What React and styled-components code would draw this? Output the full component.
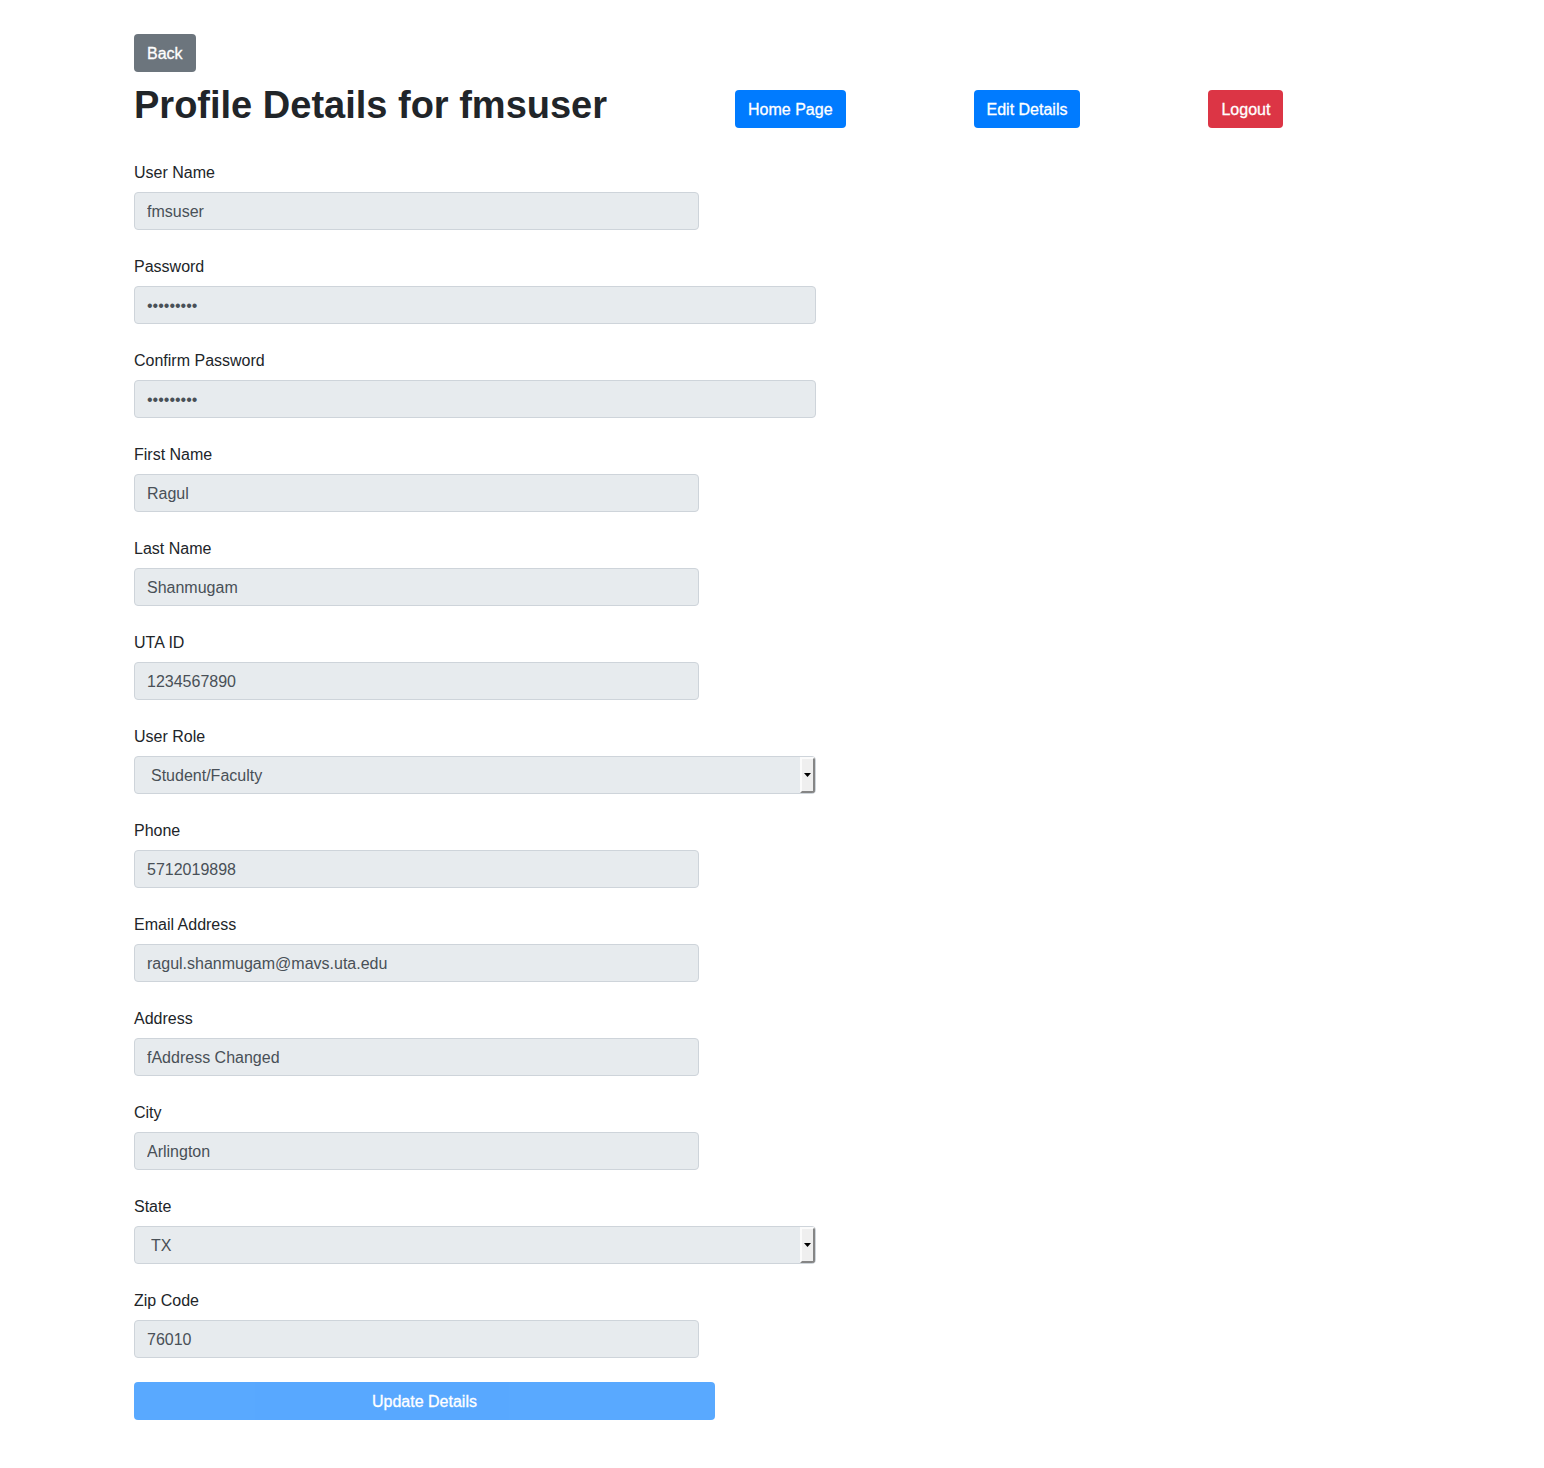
import React from "react";
import styled, { createGlobalStyle, css } from "styled-components";

const GlobalStyle = createGlobalStyle`
  *, *::before, *::after { box-sizing: border-box; }
  body {
    margin: 0;
    background: #fff;
    color: #212529;
    font-family: "Liberation Sans", Arial, sans-serif;
    font-size: 16px;
    line-height: 24px;
  }
`;

const Page = styled.main`
  padding: 34px 134px 48px;

  @media (max-width: 900px) {
    padding: 24px;
  }
`;

const variants = {
  primary: "#007bff",
  secondary: "#6c757d",
  danger: "#dc3545",
};

const Button = styled.button`
  display: block;
  padding: 8px 13px 6px;
  border: 0;
  border-radius: 4px;
  background: ${({ $variant }) => variants[$variant]};
  color: #fff;
  font: inherit;
  -webkit-text-stroke: 0.3px #fff;
  white-space: nowrap;
  cursor: pointer;

  ${({ $block }) =>
    $block &&
    css`
      width: 100%;
      max-width: 581px;
    `}

  &:disabled {
    opacity: 0.65;
    cursor: default;
  }
`;

const Header = styled.header`
  display: flex;
  flex-wrap: wrap;
  align-items: flex-end;
  gap: 16px 128px;
  margin: 10px 0 32px;
`;

const Title = styled.h1`
  margin: 0;
  font-size: 38px;
  line-height: 46px;
  font-weight: 700;
`;

const Form = styled.form`
  display: flex;
  flex-direction: column;
  gap: 24px;
  max-width: 682px;
`;

const Field = styled.div`
  display: flex;
  flex-direction: column;
  gap: 6px;
`;

const Label = styled.label`
  line-height: 26px;
`;

const controlBox = css`
  width: 100%;
  height: 38px;
  border: 1px solid #ced4da;
  border-radius: 4px;
  background: #e7ebee;
`;

const controlText = css`
  color: #495057;
  font: inherit;
  opacity: 1;
`;

const Input = styled.input`
  ${controlBox}
  ${controlText}
  max-width: ${({ $wide }) => ($wide ? "none" : "565px")};
  padding: 7px 12px 5px;
`;

const SelectBox = styled.div`
  ${controlBox}
  display: flex;
  overflow: hidden;
`;

const Select = styled.select`
  ${controlText}
  flex: 1;
  min-width: 0;
  padding: 2px 16px 0;
  border: 0;
  background: transparent;
  appearance: none;

  &:disabled {
    opacity: 1;
  }
`;

const Arrow = styled.span`
  display: flex;
  align-items: center;
  justify-content: center;
  width: 15px;
  border: 2px solid;
  border-color: #fbfbfb #858585 #858585 #fbfbfb;
  background: #efefef;
  pointer-events: none;
`;

const fields = [
  { id: "username", label: "User Name", value: "fmsuser" },
  { id: "password", label: "Password", value: "password1", type: "password" },
  { id: "confirm", label: "Confirm Password", value: "password1", type: "password" },
  { id: "firstname", label: "First Name", value: "Ragul" },
  { id: "lastname", label: "Last Name", value: "Shanmugam" },
  { id: "utaid", label: "UTA ID", value: "1234567890" },
  { id: "role", label: "User Role", value: "Student/Faculty", type: "select" },
  { id: "phone", label: "Phone", value: "5712019898" },
  { id: "email", label: "Email Address", value: "ragul.shanmugam@mavs.uta.edu" },
  { id: "address", label: "Address", value: "fAddress Changed" },
  { id: "city", label: "City", value: "Arlington" },
  { id: "state", label: "State", value: "TX", type: "select" },
  { id: "zip", label: "Zip Code", value: "76010" },
];

function Control({ id, type = "text", value }) {
  if (type === "select") {
    return (
      <SelectBox>
        <Select id={id} defaultValue={value} disabled>
          <option value={value}>{value}</option>
        </Select>
        <Arrow aria-hidden="true">
          <svg width="7" height="4" viewBox="0 0 7 4">
            <path d="M0 0h7L3.5 4z" fill="#000" />
          </svg>
        </Arrow>
      </SelectBox>
    );
  }
  return (
    <Input
      id={id}
      type={type}
      defaultValue={value}
      $wide={type === "password"}
      autoComplete="off"
      disabled
    />
  );
}

export default function App() {
  return (
    <>
      <GlobalStyle />
      <Page>
        <Button type="button" $variant="secondary">Back</Button>
        <Header>
          <Title>Profile Details for fmsuser</Title>
          <Button type="button" $variant="primary">Home Page</Button>
          <Button type="button" $variant="primary">Edit Details</Button>
          <Button type="button" $variant="danger">Logout</Button>
        </Header>
        <Form onSubmit={(event) => event.preventDefault()}>
          {fields.map((field) => (
            <Field key={field.id}>
              <Label htmlFor={field.id}>{field.label}</Label>
              <Control id={field.id} type={field.type} value={field.value} />
            </Field>
          ))}
          <Button type="submit" $variant="primary" $block disabled>
            Update Details
          </Button>
        </Form>
      </Page>
    </>
  );
}
